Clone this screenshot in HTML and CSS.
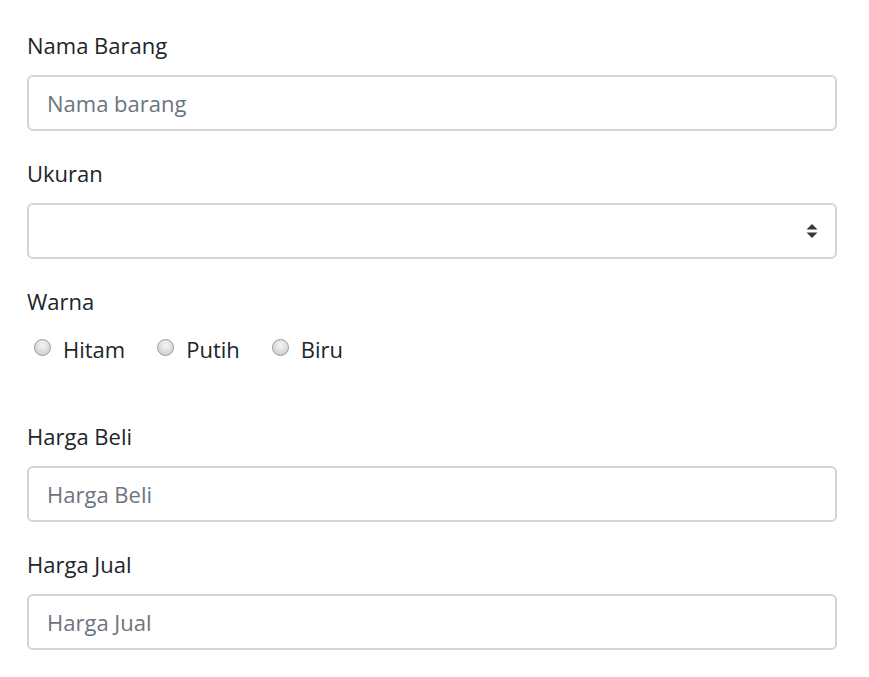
FILE: index.html
```html
<!DOCTYPE html>
<html lang="en">
<head>
    <meta charset="UTF-8">
    <title>Tambah Barang</title>
    <link rel="stylesheet" href="styles.css">
</head>
<body>
    <form class="form">
        <div class="form-group">
            <label class="label" for="nama">Nama Barang</label>
            <input class="control" id="nama" type="text" placeholder="Nama barang">
        </div>

        <div class="form-group">
            <label class="label" for="ukuran">Ukuran</label>
            <div class="select-wrap">
                <select class="control select" id="ukuran">
                    <option></option>
                </select>
                <svg class="select-arrow" width="12" height="16" viewBox="0 0 12 16">
                    <path d="M6 1 L11.5 6.5 L0.5 6.5 Z" fill="#343a40"/>
                    <path d="M6 15 L11.5 9.5 L0.5 9.5 Z" fill="#343a40"/>
                </svg>
            </div>
        </div>

        <div class="form-group radios">
            <label class="label">Warna</label>
            <div class="radio-row">
                <label class="radio"><input type="radio" name="warna"><span>Hitam</span></label>
                <label class="radio"><input type="radio" name="warna"><span>Putih</span></label>
                <label class="radio"><input type="radio" name="warna"><span>Biru</span></label>
            </div>
        </div>

        <div class="form-group">
            <label class="label" for="beli">Harga Beli</label>
            <input class="control" id="beli" type="text" placeholder="Harga Beli">
        </div>

        <div class="form-group">
            <label class="label" for="jual">Harga Jual</label>
            <input class="control" id="jual" type="text" placeholder="Harga Jual">
        </div>
    </form>
</body>
</html>
```

FILE: styles.css
```css
body {
    margin: 0;
    padding: 27px 0 0 27px;
    background: #fff;
    font-family: 'Open Sans', 'Noto Sans', sans-serif;
    color: #212529;
}

.form {
    width: 810px;
}

/* Groups */
.form-group {
    margin-bottom: 24px;
}

.form-group.radios {
    margin-bottom: 51px;
}

.label {
    display: block;
    font-size: 22px;
    line-height: 36px;
    margin-bottom: 12px;
}

/* Inputs */
.control {
    display: block;
    box-sizing: border-box;
    width: 100%;
    height: 56px;
    padding: 0 18px;
    border: 2px solid #d3d6d9;
    border-radius: 6px;
    background: #fff;
    font-family: inherit;
    font-size: 22px;
    color: #495057;
    outline: none;
}

.control::placeholder {
    color: #6c757d;
}

.select-wrap {
    position: relative;
}

.select {
    appearance: none;
    -webkit-appearance: none;
}

.select-arrow {
    position: absolute;
    right: 19px;
    top: 20px;
}

/* Radios */
.radio-row {
    display: flex;
    gap: 32px;
    padding-left: 7px;
}

.radio {
    display: flex;
    align-items: center;
    font-size: 22px;
    line-height: 36px;
}

.radio input {
    appearance: none;
    -webkit-appearance: none;
    width: 17px;
    height: 17px;
    margin: 0 12px 0 0;
    border: 1px solid #9a9a9a;
    border-radius: 50%;
    background: radial-gradient(circle at 50% 35%, #f6f6f6, #d4d4d4 70%, #c8c8c8);
    position: relative;
    top: -2px;
}
```
